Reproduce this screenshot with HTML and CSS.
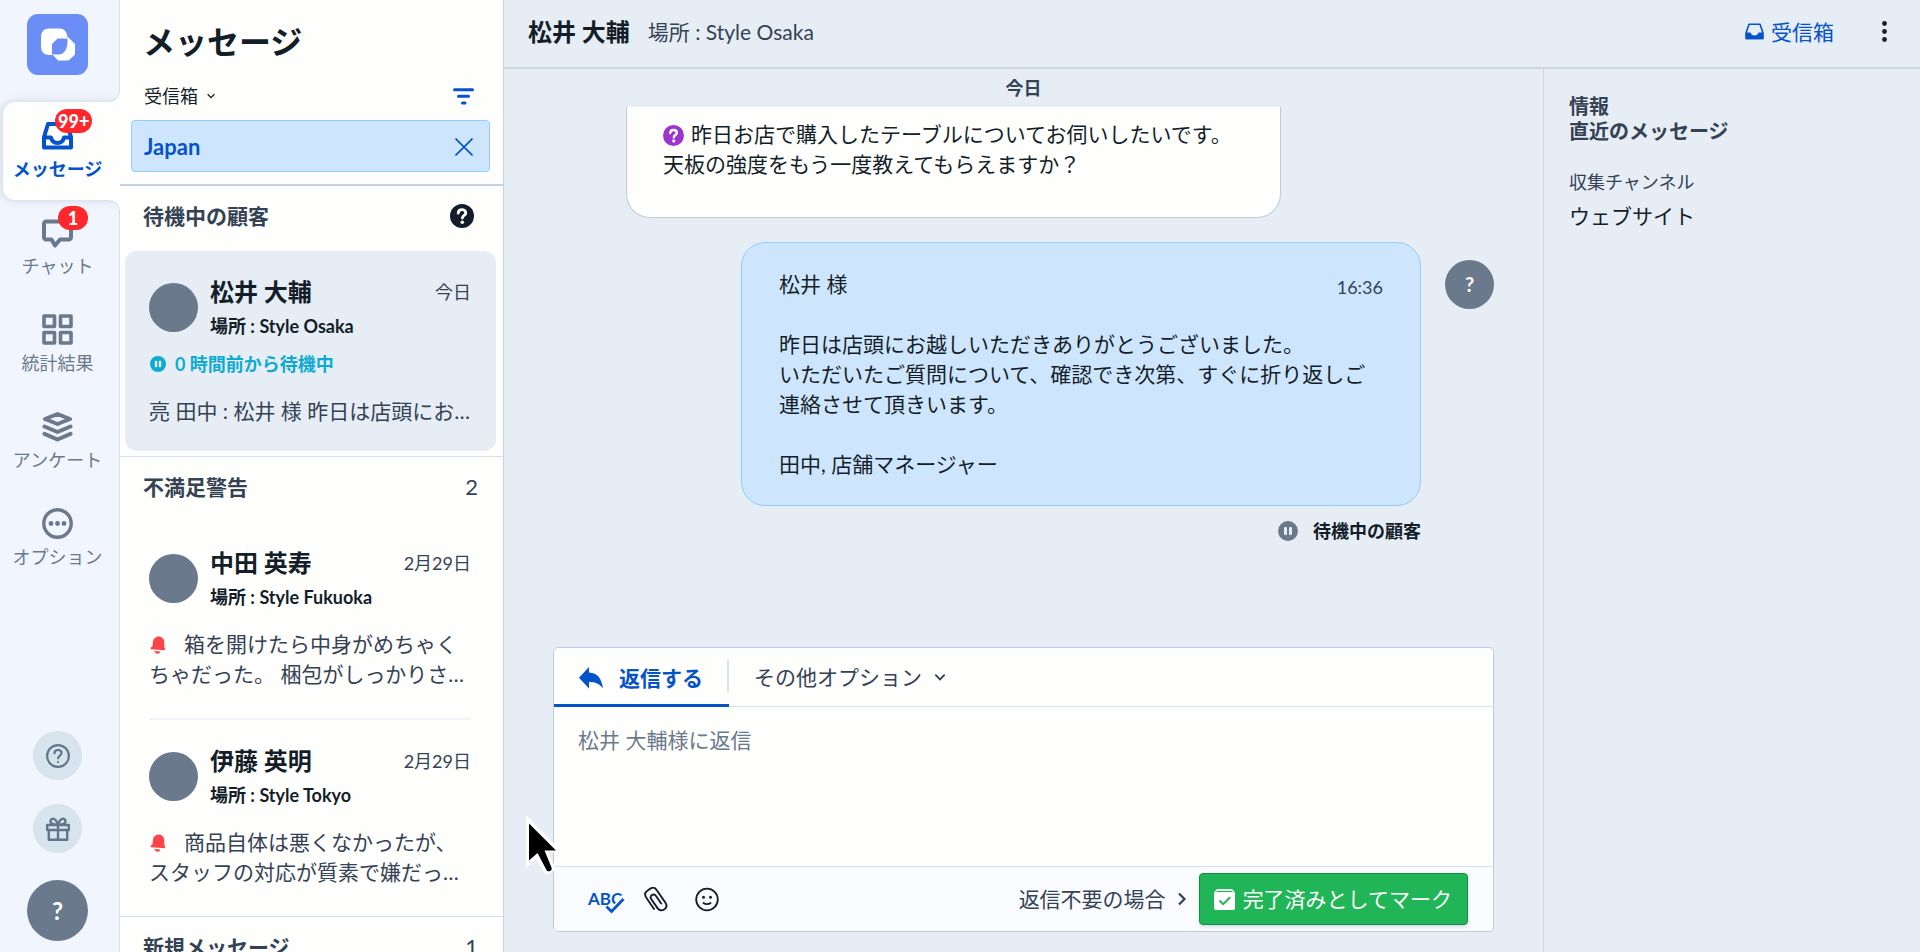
FILE: index.html
```html
<!DOCTYPE html>
<html lang="ja">
<head>
<meta charset="utf-8">
<title>メッセージ</title>
<link rel="stylesheet" href="styles.css">
</head>
<body>
<svg class="defs" aria-hidden="true">
  <symbol id="pause" viewBox="0 0 20 20">
    <circle cx="10" cy="10" r="10" fill="currentColor"/>
    <rect class="pause-bar" x="6" y="6" width="3" height="8" rx="1"/>
    <rect class="pause-bar" x="11" y="6" width="3" height="8" rx="1"/>
  </symbol>
  <symbol id="question" viewBox="0 0 24 24">
    <circle cx="12" cy="12" r="12" fill="currentColor"/>
    <path d="M8.2 9.2C8.3 6.9 9.9 5.6 12 5.6s3.8 1.3 3.8 3.3c0 2.5-3.3 2.6-3.4 5.1" fill="none" stroke="#fff" stroke-width="2.8" stroke-linecap="round"/>
    <circle cx="12.3" cy="18.2" r="1.8" fill="#fff"/>
  </symbol>
  <symbol id="bell" viewBox="0 0 16 18">
    <path d="M7 .8C9 0 14.300 1 14.300 6.700v4.600l.7 1.500v1.500L.8 13.200v-1.600l1.700-1.400.4-4.400C3.300 3 4.900 1.600 7 .8z" fill="currentColor"/>
    <path d="M4.300 15l5.900.5c-.2 1.500-1.400 2.300-2.800 2.200-1.600-.1-2.800-1.200-3.100-2.700z" fill="currentColor"/>
  </symbol>
  <symbol id="chevron" viewBox="0 0 12 12">
    <path d="M2 4l4 4 4-4" fill="none" stroke="currentColor" stroke-width="1.600"/>
  </symbol>
</svg>
<div class="app">
  <nav class="rail">
    <a class="logo" href="#" aria-label="ホーム">
      <svg viewBox="0 0 61 61">
        <path fill="#fff" fill-rule="evenodd" d="M22 14.500h10.500c4.500 0 7.500 3 8 9h1l6.500 6.500v10.500L41.500 46.500H31l-5-5.500h-3.500c-5.500 0-8.500-3.500-8.500-8.500v-9.500c0-5 3-8.500 8-8.500zM30.500 24.500h10c.5 9-2.500 15.500-8 16h-7.500V30z"/>
      </svg>
    </a>
    <ul class="nav">
      <li><a class="nav-item active" href="#">
        <span class="nav-icon">
          <svg viewBox="0 0 31 31" fill="none" stroke="currentColor" stroke-width="4" stroke-linejoin="round"><path d="M2 17L6 4h19l4 13v10.500H2zM2 17.500h7c.8 3.500 3 5.500 6.500 5.500s5.700-2 6.500-5.500h7"/></svg>
          <span class="badge">99+</span>
        </span>メッセージ</a></li>
      <li><a class="nav-item" href="#">
        <span class="nav-icon">
          <svg viewBox="0 0 31 31" fill="none" stroke="currentColor" stroke-width="4" stroke-linejoin="round"><path d="M4 4.500h23c1 0 2 1 2 2v14c0 1-1 2-2 2h-9L13 28.500 9.500 22.500H4c-1 0-2-1-2-2v-14c0-1 1-2 2-2z"/></svg>
          <span class="badge">1</span>
        </span>チャット</a></li>
      <li><a class="nav-item" href="#">
        <span class="nav-icon">
          <svg viewBox="0 0 31 31" fill="none" stroke="currentColor" stroke-width="3.600" stroke-linejoin="round"><path d="M2 2h10.500v10.500H2zM18.500 2H29v10.500H18.500zM2 18.500h10.500V29H2zM18.500 18.500H29V29H18.500z"/></svg>
        </span>統計結果</a></li>
      <li><a class="nav-item" href="#">
        <span class="nav-icon">
          <svg viewBox="0 0 31 31" fill="none" stroke="currentColor" stroke-width="4" stroke-linejoin="round" stroke-linecap="round"><path d="M3 8L15.500 3 28 8 15.500 13zM2.500 15.500l13 5.500 13-5.500M2.500 22.800L15.500 28.500l13-5.700"/></svg>
        </span>アンケート</a></li>
      <li><a class="nav-item" href="#">
        <span class="nav-icon">
          <svg viewBox="0 0 31 31"><circle cx="15.500" cy="15.500" r="13.700" fill="none" stroke="currentColor" stroke-width="3.400"/><g fill="currentColor"><circle cx="9" cy="15.500" r="2.400"/><circle cx="15.500" cy="15.500" r="2.400"/><circle cx="22" cy="15.500" r="2.400"/></g></svg>
        </span>オプション</a></li>
    </ul>
    <div class="rail-foot">
      <button class="round" aria-label="ヘルプ">
        <svg viewBox="0 0 24 24" fill="none" stroke="currentColor" stroke-width="2.200" stroke-linecap="round"><circle cx="12" cy="12" r="10.900"/><path d="M8.500 9.300c0-2 1.500-3.300 3.500-3.300s3.500 1.300 3.500 3.100c0 2.400-3.300 2.500-3.400 5.200"/><path d="M12 18v.1"/></svg>
      </button>
      <button class="round" aria-label="新機能">
        <svg viewBox="0 0 24 24" fill="none" stroke="currentColor" stroke-width="2.400" stroke-linejoin="round"><path d="M1.200 8h21.600v5H1.200zM2.800 13h18.400v9.800H2.800zM12 8v14.800M12 7.500C6 7.700 4 5.800 4.600 3.600 5.300.9 9.500.5 12 7.500zM12 7.500c6 .2 8-1.700 7.400-3.900C18.700.9 14.500.5 12 7.500z"/></svg>
      </button>
      <button class="me">?</button>
    </div>
  </nav>

  <section class="inbox">
    <header class="inbox-head">
      <h1>メッセージ</h1>
      <div class="inbox-bar">
        <button class="plain folder">受信箱 <svg class="chev-s"><use href="#chevron"/></svg></button>
        <button class="plain filter" aria-label="フィルター"><svg viewBox="0 0 21 17" fill="none" stroke="currentColor" stroke-width="3" stroke-linecap="round"><path d="M1.500 1.700h18M5.500 8.300h10M9.500 15h2.500"/></svg></button>
      </div>
      <div class="search">
        <input type="text" value="Japan" aria-label="検索">
        <button class="plain clear" aria-label="クリア"><svg viewBox="0 0 18 18" fill="none" stroke="currentColor" stroke-width="1.600"><path d="M.5.5l17 17M17.500.5l-17 17"/></svg></button>
      </div>
    </header>

    <section class="group">
      <h2>待機中の顧客 <svg class="group-help"><use href="#question"/></svg></h2>
      <article class="card selected">
        <div class="card-head">
          <span class="face"></span>
          <div class="who"><h3>松井 大輔</h3><time>今日</time><p>場所 : Style Osaka</p></div>
        </div>
        <p class="waiting"><svg><use href="#pause"/></svg>0 時間前から待機中</p>
        <p class="preview">亮 田中 : 松井 様 昨日は店頭にお…</p>
      </article>
    </section>

    <section class="group">
      <h2>不満足警告 <span class="count">2</span></h2>
      <article class="card">
        <div class="card-head">
          <span class="face"></span>
          <div class="who"><h3>中田 英寿</h3><time>2月29日</time><p>場所 : Style Fukuoka</p></div>
        </div>
        <p class="preview"><svg class="bell"><use href="#bell"/></svg>箱を開けたら中身がめちゃくちゃだった。 梱包がしっかりさ…</p>
      </article>
      <article class="card">
        <div class="card-head">
          <span class="face"></span>
          <div class="who"><h3>伊藤 英明</h3><time>2月29日</time><p>場所 : Style Tokyo</p></div>
        </div>
        <p class="preview"><svg class="bell"><use href="#bell"/></svg>商品自体は悪くなかったが、スタッフの対応が質素で嫌だっ…</p>
      </article>
    </section>

    <section class="group">
      <h2>新規メッセージ <span class="count">1</span></h2>
    </section>
  </section>

  <main class="main">
    <header class="main-head">
      <h2>松井 大輔</h2>
      <span class="place">場所 : Style Osaka</span>
      <a class="to-inbox" href="#"><svg viewBox="0 0 19 17"><path d="M4 1.200h11l2.800 8.300v6H1.200v-6z" fill="none" stroke="currentColor" stroke-width="1.600" stroke-linejoin="round"/><path d="M.5 9.500h5c.6 1.900 2 3 4 3s3.400-1.100 4-3h5v6.700h-18z" fill="currentColor"/></svg>受信箱</a>
      <button class="plain more" aria-label="メニュー"><svg viewBox="0 0 5 21" fill="currentColor"><circle cx="2.500" cy="2.500" r="2.400"/><circle cx="2.500" cy="10.500" r="2.400"/><circle cx="2.500" cy="18.500" r="2.400"/></svg></button>
    </header>
    <div class="body">
      <div class="chat">
        <p class="day">今日</p>
        <div class="bubble in"><p><svg class="q"><use href="#question"/></svg>昨日お店で購入したテーブルについてお伺いしたいです。<br>天板の強度をもう一度教えてもらえますか？</p></div>
        <div class="out-row">
          <div class="out-col">
            <div class="bubble out">
              <time>16:36</time>
              <p>松井 様<br><br>昨日は店頭にお越しいただきありがとうございました。<br>いただいたご質問について、確認でき次第、すぐに折り返しご連絡させて頂きいます。<br><br>田中, 店舗マネージャー</p>
            </div>
            <p class="status"><svg><use href="#pause"/></svg>待機中の顧客</p>
          </div>
          <span class="face sender">?</span>
        </div>
        <form class="composer">
          <div class="tabs">
            <button type="button" class="plain tab current"><svg viewBox="0 0 24 22"><path d="M10 0v5.500C18.500 6 22.500 11 24 21.500 20.500 16.500 16.500 15 10 15v6.500L0 10.800z" fill="currentColor"/></svg>返信する</button>
            <button type="button" class="plain tab">その他オプション<svg class="chev-m"><use href="#chevron"/></svg></button>
          </div>
          <textarea placeholder="松井 大輔様に返信" aria-label="返信"></textarea>
          <div class="tools">
            <button type="button" class="plain spell" aria-label="スペルチェック"><span>ABC</span><svg viewBox="0 0 20 17" fill="none"><path d="M1.500 9.500l5 5L18.500 2" stroke="#fafbfe" stroke-width="6"/><path d="M1.500 9.500l5 5L18.500 2" stroke="currentColor" stroke-width="2.800"/></svg></button>
            <button type="button" class="plain clip" aria-label="添付"><svg viewBox="0 0 24 25" fill="none" stroke="currentColor" stroke-width="1.900" stroke-linecap="round"><path d="M10 22L2.500 11C-.5 6.500 1.500 5 5 2.500S10.500-.5 13 3.500l8.300 12c2 3 1.500 5.200-.8 6.800s-5.200 1.500-7-1.200L7.200 12C6 10 6.500 9 8 8s2.900-.7 4.200 1.200l5 7.300"/></svg></button>
            <button type="button" class="plain smile" aria-label="絵文字"><svg viewBox="0 0 24 24" fill="none" stroke="currentColor" stroke-width="1.800" stroke-linecap="round"><circle cx="12" cy="12" r="10.800"/><path d="M8.500 15.500c1.800 1.600 5.200 1.600 7 0"/><circle cx="8.500" cy="9.700" r=".6" fill="currentColor"/><circle cx="15.500" cy="9.700" r=".6" fill="currentColor"/></svg></button>
            <span class="hint">返信不要の場合<svg class="chev-r" viewBox="0 0 10 14"><path d="M2 1.500L7.500 7 2 12.500" fill="none" stroke="currentColor" stroke-width="2.200"/></svg></span>
            <button type="button" class="done"><svg viewBox="0 0 21 21"><path d="M3 0h15l3 3.500V19c0 1.200-.8 2-2 2H2c-1.200 0-2-.8-2-2V3.500z" fill="#fff"/><path d="M2.500 2.500h16" stroke="#20b556" stroke-width="1.200"/><path d="M5.500 11.500l3.700 3.700 7-7" fill="none" stroke="#20b556" stroke-width="2"/></svg>完了済みとしてマーク</button>
          </div>
        </form>
      </div>
      <aside class="info">
        <h3>情報<br>直近のメッセージ</h3>
        <dl><dt>収集チャンネル</dt><dd>ウェブサイト</dd></dl>
      </aside>
    </div>
  </main>
</div>
<svg class="cursor" viewBox="0 0 34 62" aria-hidden="true">
  <path d="M2 3v53l10-9 7 12c1.500 3 4 3.500 6.500 2.200S32 57.500 30.500 54.500L24 40h10v-4z" fill="#fff"/>
  <path d="M5 11.500v37L13.500 41l9 17c1 1.800 2.800 1.500 4 .8s1.700-2 .8-3.800L20.500 38.500h11.500z" fill="#000"/>
</svg>
</body>
</html>
```
FILE: styles.css
```css
* { box-sizing: border-box; margin: 0; padding: 0; }
body {
  height: 100vh;
  overflow: hidden;
  font: 21px/30px Lato, "Noto Sans CJK JP", sans-serif;
  color: #141e29;
  background: #e6edf4;
}
button, input, textarea { font: inherit; color: inherit; border: 0; outline: 0; background: none; }
a { color: inherit; text-decoration: none; }
ul { list-style: none; }
svg { display: block; flex: none; }
.defs { position: absolute; width: 0; height: 0; }
.plain { display: flex; align-items: center; cursor: pointer; }
.app { display: flex; height: 100%; }

/* navigation rail */
.rail {
  flex: none;
  width: 120px;
  display: flex;
  flex-direction: column;
  padding: 14px 0 11px 3px;
  background: #f1f5fd;
  border-right: 1px solid #d3e0ec;
}
.logo { width: 61px; height: 61px; margin: 0 0 27px 24px; border-radius: 11px; background: #6b8ef6; }
.nav { margin-right: -1px; }
.nav li { height: 97px; }
.nav-item {
  position: relative;
  display: flex;
  flex-direction: column;
  align-items: center;
  height: 98px;
  padding: 18px 8px 0 0;
  font-size: 18px;
  line-height: 28px;
  white-space: nowrap;
  color: #6b798c;
}
.nav-icon { position: relative; margin-bottom: 4px; }
.nav-icon svg { width: 31px; height: 31px; }
.active {
  color: #0553cb;
  font-weight: 700;
  background: #fefefd;
  border-radius: 12px 0 0 12px;
  box-shadow: -1px 0 8px #c9d3e2;
  clip-path: inset(-12px 0 -12px -3px);
}
.active::before, .active::after { content: ""; position: absolute; right: 0; width: 10px; height: 10px; }
.active::before { top: -10px; background: radial-gradient(circle at 0 0, transparent 8px, #d3e0ec 9px, #fefefd 10px); }
.active::after { bottom: -10px; background: radial-gradient(circle at 0 100%, transparent 8px, #d3e0ec 9px, #fefefd 10px); }
.badge {
  position: absolute;
  top: -11px;
  left: 13px;
  min-width: 30px;
  padding: 0 3px;
  border-radius: 12px;
  background: #ff272b;
  color: #fff;
  font-size: 18px;
  font-weight: 900;
  line-height: 24px;
  text-align: center;
}
.nav li + li .badge { left: 16px; }
.rail-foot { display: flex; flex-direction: column; align-items: center; gap: 24px; margin-top: auto; padding-right: 7px; }
.round { display: grid; place-items: center; width: 49px; height: 49px; border-radius: 50%; background: #d7e3ed; color: #64748a; }
.round svg { width: 24px; height: 24px; }
.me { width: 61px; height: 61px; margin-top: 3px; border-radius: 50%; background: #6b798c; color: #fff; font-size: 24px; font-weight: 700; }

/* conversation list */
.inbox { flex: none; width: 384px; overflow: hidden; background: #fefefd; border-right: 1px solid #c4d5e4; }
.inbox-head { padding: 19px 13px 12px 11px; border-bottom: 2px solid #c4d3e3; }
h1 { padding-left: 12px; font-size: 32px; line-height: 46px; }
.inbox-bar { display: flex; justify-content: space-between; align-items: center; height: 28px; margin: 17px 16px 10px 13px; }
.folder { gap: 8px; font-size: 18px; line-height: 28px; }
.chev-s { width: 10px; height: 10px; }
.filter, .clear { color: #0553cb; }
.filter svg { width: 21px; height: 17px; }
.search { display: flex; align-items: center; height: 52px; padding: 2px 16px 0 12px; background: #cee6fd; border: 1px solid #93cdfb; border-radius: 4px; }
.search input { flex: 1; min-width: 0; font-size: 22px; font-weight: 700; color: #0553cb; }
.clear svg { width: 18px; height: 18px; }
.group { border-bottom: 1px solid #d0e1f1; }
h2 { font-size: 21px; line-height: 30px; }
.group h2 { display: flex; align-items: center; justify-content: space-between; height: 60px; padding: 0 25px 0 23px; color: #344254; }
.group-help { width: 24px; height: 24px; margin-right: 4px; color: #141e29; }
.count { font-size: 22px; font-weight: 400; }
.card { margin: 5px 7px 0 5px; padding: 27px 22px 29px 24px; border-radius: 12px; }
.card.selected { margin-bottom: 5px; padding-bottom: 25px; background: #e6edf4; }
.card + .card { position: relative; margin-top: 0; padding-top: 29px; }
.card + .card::before { content: ""; position: absolute; inset: 0 25px auto 24px; border-top: 2px solid #eff4fa; }
.card-head { display: flex; gap: 12px; }
.face { flex: none; width: 49px; height: 49px; margin-top: 5px; border-radius: 50%; background: #6b798c; }
.who { flex: 1; display: grid; grid-template-columns: 1fr auto; row-gap: 8px; align-items: center; padding-right: 3px; }
.who h3 { font-size: 24px; line-height: 28px; }
.who time { font-size: 18px; line-height: 24px; color: #344254; }
.who p { font-size: 18px; line-height: 24px; font-weight: 700; }
.waiting { display: flex; align-items: center; gap: 9px; margin-top: 14px; font-size: 18px; line-height: 24px; font-weight: 700; color: #0daad4; }
.waiting svg { width: 16px; height: 16px; margin-left: 1px; }
.pause-bar { fill: #e6edf4; }
.preview { margin-top: 20px; color: #344254; }
.bell { display: inline-block; width: 16px; height: 18px; margin: 0 18px 0 1px; vertical-align: -2px; color: #ff4448; }

/* conversation */
.main { flex: 1; min-width: 0; display: flex; flex-direction: column; }
.main-head { flex: none; display: flex; align-items: center; height: 69px; padding: 0 33px 4px 24px; border-bottom: 2px solid #c9d8e4; }
.main-head h2 { font-size: 24px; }
.place { margin-left: 18px; color: #344254; }
.to-inbox { display: flex; align-items: center; gap: 7px; margin: 0 48px 0 auto; color: #0553cb; }
.to-inbox svg { width: 19px; height: 17px; }
.more svg { width: 5px; height: 21px; }
.body { flex: 1; min-height: 0; display: flex; }
.chat { flex: 1; min-width: 0; display: flex; flex-direction: column; padding: 0 49px 20px; }
.day { height: 38px; padding-top: 4px; text-align: center; font-size: 18px; font-weight: 700; color: #344254; }
.bubble { border: 1px solid #bccbe0; border-radius: 24px; }
.in { align-self: flex-start; width: 655px; margin-left: 73px; padding: 12px 36px 38px; background: #fefefd; border-top: 0; border-radius: 0 0 24px 24px; }
.q { display: inline-block; width: 21px; height: 21px; margin: 0 7px 0 0; vertical-align: -4px; color: #9c35d0; }
.out-row { display: flex; justify-content: flex-end; gap: 24px; margin-top: 24px; }
.out-col { width: 680px; }
.out { padding: 26px 37px; background: #cee6fd; border-color: #93cdfb; }
.out time { float: right; font-size: 18px; line-height: 36px; color: #344254; }
.sender { margin-top: 18px; color: #fff; font-size: 20px; font-weight: 700; line-height: 49px; text-align: center; }
.status { display: flex; align-items: center; justify-content: flex-end; gap: 15px; margin-top: 10px; font-size: 18px; font-weight: 700; }
.status svg { width: 20px; height: 20px; color: #6b798c; }
.composer { display: flex; flex-direction: column; height: 285px; margin-top: auto; border: 1px solid #bccbe0; border-radius: 5px; background: #fefefd; overflow: hidden; }
.tabs { display: flex; height: 59px; border-bottom: 1px solid #d4e3f0; }
.tab { position: relative; padding: 0 26px 0 25px; color: #344254; }
.current { gap: 16px; height: 59px; padding-top: 3px; border-bottom: 3px solid #0553cb; color: #0553cb; font-weight: 700; }
.current svg { width: 24px; height: 22px; }
.current::after { content: ""; position: absolute; top: 12px; right: 0; height: 32px; border-right: 2px solid #d4e3f0; }
.chev-m { width: 14px; height: 14px; margin-left: 11px; }
textarea { flex: 1; padding: 18px 24px; resize: none; }
::placeholder { color: #6b798c; opacity: 1; }
.tools { flex: none; display: flex; align-items: center; height: 65px; padding: 0 25px 0 34px; background: #fafbfe; border-top: 1px solid #d4e3f0; }
.spell { position: relative; color: #0553cb; font-size: 17px; line-height: 24px; font-weight: 700; }
.spell svg { position: absolute; left: 17px; top: 10px; width: 20px; height: 17px; }
.clip { margin-left: 22px; }
.clip svg, .smile svg { width: 24px; height: 25px; }
.smile { margin-left: 27px; }
.hint { display: flex; align-items: center; margin-left: auto; color: #344254; }
.chev-r { width: 10px; height: 14px; margin: 0 12px 0 11px; }
.done { display: flex; align-items: center; gap: 8px; height: 52px; padding: 0 15px 0 14px; border: 1px solid #148f42; border-radius: 4px; background: #20b556; color: #fff; box-shadow: 0 2px 3px #d5dce5; cursor: pointer; }
.done svg { width: 21px; height: 21px; }

/* details */
.info { flex: none; width: 377px; padding: 25px; border-left: 1px solid #c9d8e4; color: #344254; }
.info h3 { font-size: 20px; line-height: 25px; }
.info dt { margin-top: 24px; font-size: 18px; line-height: 28px; }
.info dd { margin-top: 5px; color: #141e29; }
.cursor { position: absolute; left: 524px; top: 812px; width: 34px; height: 62px; }
```
